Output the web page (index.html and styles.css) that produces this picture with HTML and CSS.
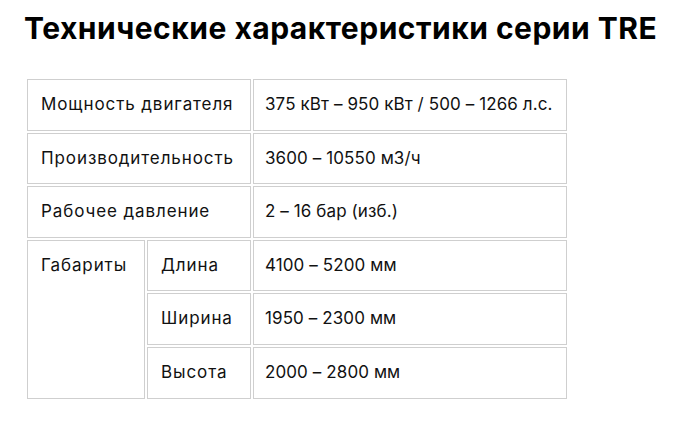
FILE: index.html
```html
<!DOCTYPE html>
<html lang="ru">
<head>
<meta charset="utf-8">
<title>Технические характеристики серии TRE</title>
<link rel="stylesheet" href="styles.css">
</head>
<body>
<div class="page">
  <h1 class="title">Технические характеристики серии TRE</h1>
  <table class="specs">
    <tbody>
      <tr>
        <td colspan="2" class="label">Мощность двигателя</td>
        <td class="value">375 кВт – 950 кВт / 500 – 1266 л.с.</td>
      </tr>
      <tr>
        <td colspan="2" class="label">Производительность</td>
        <td class="value">3600 – 10550 м3/ч</td>
      </tr>
      <tr>
        <td colspan="2" class="label">Рабочее давление</td>
        <td class="value">2 – 16 бар (изб.)</td>
      </tr>
      <tr>
        <td rowspan="3" class="label group">Габариты</td>
        <td class="label sub">Длина</td>
        <td class="value">4100 – 5200 мм</td>
      </tr>
      <tr>
        <td class="label sub">Ширина</td>
        <td class="value">1950 – 2300 мм</td>
      </tr>
      <tr>
        <td class="label sub">Высота</td>
        <td class="value">2000 – 2800 мм</td>
      </tr>
    </tbody>
  </table>
</div>
</body>
</html>
```
FILE: styles.css
```css
html, body {
  margin: 0;
  padding: 0;
  background: #fff;
}
.page {
  padding: 12px 0 0 24px;
  font-family: Inter, "Noto Sans", sans-serif;
}
.title {
  margin: 0 0 33px 0;
  font-size: 30px;
  line-height: 32px;
  font-weight: 700;
  color: #000;
  letter-spacing: 0.5px;
}
.specs {
  margin-left: 1px;
  border-collapse: separate;
  border-spacing: 2px;
  font-size: 17px;
  color: #111;
}
.specs td {
  border: 1px solid #cfcfcf;
  padding: 12px 13px;
  line-height: 25.6px;
  vertical-align: middle;
  white-space: nowrap;
}
.specs td.label {
  letter-spacing: 0.9px;
}
.specs td.value {
  letter-spacing: 0.1px;
  padding-left: 11px;
  width: 288px;
}
.specs td.group {
  vertical-align: top;
  width: 90px;
}
.specs td.sub {
  width: 76px;
}
```
